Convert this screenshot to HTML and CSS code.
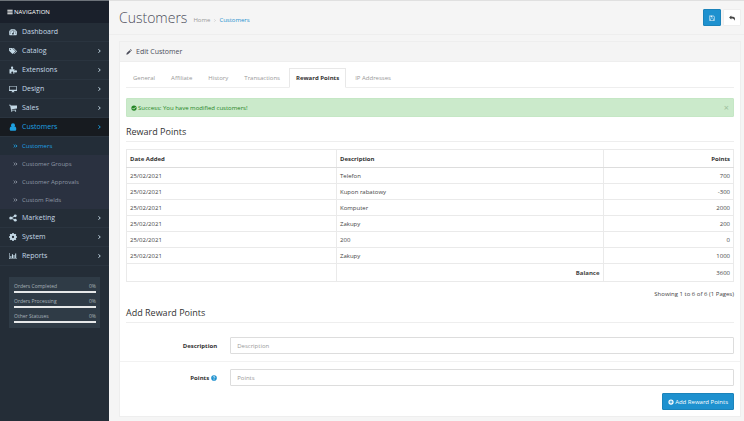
FILE: index.html
```html
<!DOCTYPE html>
<html lang="en">
<head>
    <meta charset="UTF-8">
    <meta name="viewport" content="width=device-width, initial-scale=1.0">
    <title>Customers</title>
    <link rel="stylesheet" href="styles.css">
</head>
<body>

    <!-- Icon set -->
    <svg class="sprite" aria-hidden="true">
        <symbol id="i-bars" viewBox="0 0 16 16"><path d="M1 2h14v2.6H1zM1 6.7h14v2.6H1zM1 11.4h14V14H1z"/></symbol>
        <symbol id="i-dashboard" viewBox="0 0 16 16"><path fill-rule="evenodd" d="M8 2a8 8 0 0 0-8 8c0 1.600.4 3 1.200 4.300.1.200.3.300.6.300h12.400c.3 0 .5-.1.600-.3A8 8 0 0 0 8 2zM2.300 9a1.100 1.100 0 1 1 0 2.200 1.100 1.100 0 0 1 0-2.200zM4 5a1.100 1.100 0 1 1 0 2.200A1.100 1.100 0 0 1 4 5zM8 3.200a1.100 1.100 0 1 1 0 2.200 1.100 1.100 0 0 1 0-2.200zM12 5a1.100 1.100 0 1 1 0 2.200A1.100 1.100 0 0 1 12 5zM13.700 9a1.100 1.100 0 1 1 0 2.200 1.100 1.100 0 0 1 0-2.200zM8.600 6.500l1.100.3-.9 3.400a1.700 1.700 0 1 1-1.100-.3z"/></symbol>
        <symbol id="i-tags" viewBox="0 0 18 16"><path fill-rule="evenodd" d="M0 2.200C0 1.500.5 1 1.200 1h4.600c.6 0 1.400.3 1.900.8l6 6c.5.5.5 1.200 0 1.700l-4.800 4.900c-.5.4-1.200.4-1.700 0l-6.400-6.500C.3 7.400 0 6.700 0 6zM3 2.700a1.200 1.200 0 1 0 0 2.400 1.200 1.200 0 0 0 0-2.400z"/><path d="M8 1h1.400c.7 0 1.400.3 1.900.8l6 6c.5.5.5 1.200 0 1.700l-4.900 4.900c-.6.500-1.100.4-1.700-.2l4.600-4.700c.5-.5.5-1.200 0-1.700z"/></symbol>
        <symbol id="i-puzzle" viewBox="0 0 16 16"><path d="M1 6.500h4.300C5.800 5.800 4 5 4 3.300 4 2 4.900 1 6.200 1s2.200 1 2.200 2.300C8.400 5 6.900 5.600 7.400 6.500H11v3c.9.3 1.300-1 2.800-1 1.300 0 2.200 1 2.200 2.300s-.9 2.300-2.200 2.300c-1.500 0-1.900-1.300-2.800-1V15H7.700c-.4-1 1-1.300 1-2.500 0-1-.8-1.700-2.100-1.700s-2.100.7-2.100 1.700c0 1.200 1.300 1.500 1 2.500H1z"/></symbol>
        <symbol id="i-desktop" viewBox="0 0 18 16"><path fill-rule="evenodd" d="M1.400 1h15.200c.8 0 1.400.6 1.400 1.400v8.700c0 .8-.6 1.400-1.400 1.400H11V14h1.500v1.200h-7V14H7v-1.500H1.400c-.8 0-1.400-.6-1.400-1.400V2.400C0 1.600.6 1 1.400 1zM1.500 2.400v7.500h15V2.400z"/></symbol>
        <symbol id="i-cart" viewBox="0 0 16 16"><path d="M0 1.500h3.100l.5 1.700H16v6l-10.800 1.300.2 1H14v1.300H4.200L2.200 2.900H0z"/><circle cx="5.400" cy="14" r="1.400"/><circle cx="13" cy="14" r="1.400"/></symbol>
        <symbol id="i-user" viewBox="0 0 16 16"><circle cx="8" cy="4.500" r="4"/><path d="M4.500 7C2 7.200 1.500 10 1.500 12.500 1.500 14.500 2.700 15.500 4.500 15.500h7c1.800 0 3-1 3-3 0-2.500-.5-5.300-3-5.500z"/></symbol>
        <symbol id="i-share" viewBox="0 0 16 16"><path d="M4 8l8-4M4 8l8 4" fill="none" stroke="currentColor" stroke-width="2"/><circle cx="3.500" cy="8" r="3"/><circle cx="12.500" cy="3.700" r="2.900"/><circle cx="12.500" cy="12.300" r="2.900"/></symbol>
        <symbol id="i-cog" viewBox="0 0 16 16"><circle cx="8" cy="8" r="4.300" fill="none" stroke="currentColor" stroke-width="4"/><path d="M8 0v3M8 13v3M0 8h3M13 8h3M2.400 2.400l2 2M11.600 11.600l2 2M13.600 2.400l-2 2M4.400 11.600l-2 2" stroke="currentColor" stroke-width="3"/></symbol>
        <symbol id="i-chart" viewBox="0 0 18 16"><path d="M0 1h1.300v12.700H18V15H0zM3 8h2.300v4.700H3zM6.600 4H9v8.700H6.600zM10.200 6h2.300v6.700h-2.300zM13.800 2.500h2.400v10.200h-2.400z"/></symbol>
        <symbol id="i-angle" viewBox="0 0 10 16"><path d="M3 4.500L6.500 8 3 11.500" fill="none" stroke="currentColor" stroke-width="2"/></symbol>
        <symbol id="i-double" viewBox="0 0 16 16"><path d="M2.500 3.500L7 8l-4.500 4.500M8.500 3.500L13 8l-4.500 4.500" fill="none" stroke="currentColor" stroke-width="2.800"/></symbol>
        <symbol id="i-pencil" viewBox="0 0 16 16"><path d="M1 15l.9-4.300 7.700-7.700 3.400 3.400-7.700 7.700zM10.500 2.100l1-1c.6-.6 1.300-.6 1.900 0l1.500 1.500c.6.6.6 1.300 0 1.900l-1 1z"/></symbol>
        <symbol id="i-save" viewBox="0 0 16 16"><path fill-rule="evenodd" d="M1 1h10.500L15 4.500V15H1zM2.300 2.300v11.400H4V9h8v4.700h1.700V5L11 2.300v3.900H4V2.300zM7.700 2.300v2.800h2V2.300zM5.300 10.300v3.400h5.400v-3.400z"/></symbol>
        <symbol id="i-reply" viewBox="0 0 16 16"><path d="M6 1v3.200c6.500 0 10 1.800 10 6 0 1.800-.8 3.400-2 4.800.5-4.300-2-6-8-6v3.300L.3 6.600z"/></symbol>
        <symbol id="i-check" viewBox="0 0 16 16"><circle cx="8" cy="8" r="7"/><path class="cut-alert" d="M4 8l3 3 5.300-5.300"/></symbol>
        <symbol id="i-question" viewBox="0 0 16 16"><circle cx="8" cy="8" r="7.500"/><path class="cut-white" d="M5.700 6.200C5.900 3.200 10.400 3.400 10.300 6 10.200 7.600 8 7.700 8 9.600M8 11v2"/></symbol>
        <symbol id="i-plus" viewBox="0 0 16 16"><circle cx="8" cy="8" r="7"/><path class="cut-blue" d="M8 4v8M4 8h8"/></symbol>
    </svg>

    <!-- Sidebar -->
    <nav class="sidebar">
        <div class="nav-title"><svg class="icon"><use href="#i-bars"/></svg> NAVIGATION</div>
        <ul class="menu">
            <li><a href="#"><svg class="icon"><use href="#i-dashboard"/></svg><span>Dashboard</span></a></li>
            <li><a href="#"><svg class="icon"><use href="#i-tags"/></svg><span>Catalog</span><svg class="arrow"><use href="#i-angle"/></svg></a></li>
            <li><a href="#"><svg class="icon"><use href="#i-puzzle"/></svg><span>Extensions</span><svg class="arrow"><use href="#i-angle"/></svg></a></li>
            <li><a href="#"><svg class="icon"><use href="#i-desktop"/></svg><span>Design</span><svg class="arrow"><use href="#i-angle"/></svg></a></li>
            <li><a href="#"><svg class="icon"><use href="#i-cart"/></svg><span>Sales</span><svg class="arrow"><use href="#i-angle"/></svg></a></li>
            <li class="active">
                <a href="#"><svg class="icon"><use href="#i-user"/></svg><span>Customers</span><svg class="arrow"><use href="#i-angle"/></svg></a>
                <ul class="submenu">
                    <li><a class="current" href="#"><svg class="double"><use href="#i-double"/></svg>Customers</a></li>
                    <li><a href="#"><svg class="double"><use href="#i-double"/></svg>Customer Groups</a></li>
                    <li><a href="#"><svg class="double"><use href="#i-double"/></svg>Customer Approvals</a></li>
                    <li><a href="#"><svg class="double"><use href="#i-double"/></svg>Custom Fields</a></li>
                </ul>
            </li>
            <li><a href="#"><svg class="icon"><use href="#i-share"/></svg><span>Marketing</span><svg class="arrow"><use href="#i-angle"/></svg></a></li>
            <li><a href="#"><svg class="icon"><use href="#i-cog"/></svg><span>System</span><svg class="arrow"><use href="#i-angle"/></svg></a></li>
            <li><a href="#"><svg class="icon"><use href="#i-chart"/></svg><span>Reports</span><svg class="arrow"><use href="#i-angle"/></svg></a></li>
        </ul>
        <div class="stats">
            <div class="stat"><span>Orders Completed</span><span>0%</span></div>
            <div class="stat"><span>Orders Processing</span><span>0%</span></div>
            <div class="stat"><span>Other Statuses</span><span>0%</span></div>
        </div>
    </nav>

    <!-- Content -->
    <main class="content">
        <header class="page-header">
            <h1>Customers</h1>
            <div class="breadcrumb"><a href="#">Home</a><svg class="separator"><use href="#i-angle"/></svg><a class="current" href="#">Customers</a></div>
            <div class="actions">
                <button class="btn btn-primary btn-icon" type="button" aria-label="Save"><svg class="icon"><use href="#i-save"/></svg></button>
                <button class="btn btn-default btn-icon" type="button" aria-label="Back"><svg class="icon"><use href="#i-reply"/></svg></button>
            </div>
        </header>

        <section class="panel">
            <h2 class="panel-title"><svg class="icon"><use href="#i-pencil"/></svg>Edit Customer</h2>
            <div class="panel-body">
                <div class="tabs">
                    <a href="#">General</a>
                    <a href="#">Affiliate</a>
                    <a href="#">History</a>
                    <a href="#">Transactions</a>
                    <a class="active" href="#">Reward Points</a>
                    <a href="#">IP Addresses</a>
                </div>

                <div class="alert">
                    <svg class="icon"><use href="#i-check"/></svg>
                    <span>Success: You have modified customers!</span>
                    <button class="close" type="button" aria-label="Close">×</button>
                </div>

                <h3>Reward Points</h3>
                <table class="points">
                    <thead>
                        <tr><th class="date">Date Added</th><th>Description</th><th class="amount">Points</th></tr>
                    </thead>
                    <tbody>
                        <tr><td>25/02/2021</td><td>Telefon</td><td class="amount">700</td></tr>
                        <tr><td>25/02/2021</td><td>Kupon rabatowy</td><td class="amount">-300</td></tr>
                        <tr><td>25/02/2021</td><td>Komputer</td><td class="amount">2000</td></tr>
                        <tr><td>25/02/2021</td><td>Zakupy</td><td class="amount">200</td></tr>
                        <tr><td>25/02/2021</td><td>200</td><td class="amount">0</td></tr>
                        <tr><td>25/02/2021</td><td>Zakupy</td><td class="amount">1000</td></tr>
                    </tbody>
                    <tfoot>
                        <tr><td></td><td class="balance">Balance</td><td class="amount">3600</td></tr>
                    </tfoot>
                </table>
                <div class="results">Showing 1 to 6 of 6 (1 Pages)</div>

                <h3>Add Reward Points</h3>
                <form>
                    <div class="form-group">
                        <label for="description">Description</label>
                        <input type="text" id="description" placeholder="Description">
                    </div>
                    <div class="form-group">
                        <label for="points">Points <svg class="icon"><use href="#i-question"/></svg></label>
                        <input type="text" id="points" placeholder="Points">
                    </div>
                    <div class="form-actions">
                        <button class="btn btn-primary" type="button"><svg class="icon"><use href="#i-plus"/></svg>Add Reward Points</button>
                    </div>
                </form>
            </div>
        </section>
    </main>

</body>
</html>
```
FILE: styles.css
```css
/* General Styles */
* {
    box-sizing: border-box;
}

body {
    display: flex;
    min-height: 100vh;
    margin: 0;
    font-family: 'Open Sans', sans-serif;
    font-size: 6px;
    line-height: 8px;
    color: #444;
    background-color: #f5f5f5;
}

a {
    color: inherit;
    text-decoration: none;
}

ul {
    list-style: none;
    margin: 0;
    padding: 0;
}

.sprite {
    position: absolute;
    width: 0;
    height: 0;
}

.icon {
    flex: none;
    width: 6px;
    height: 6px;
    fill: currentColor;
}

.cut-alert,
.cut-white,
.cut-blue {
    fill: none;
    stroke: #cbeacb;
    stroke-width: 2.4;
}

.cut-white {
    stroke: #fff;
    stroke-width: 2;
}

.cut-blue {
    stroke: #1e91cf;
}

/* Sidebar */
.sidebar {
    flex: none;
    width: 109px;
    background-color: #242d37;
    border-top: 1px solid #6d737a;
}

.nav-title {
    display: flex;
    align-items: center;
    gap: 1px;
    height: 22px;
    padding-left: 7px;
    color: #fff;
    background-color: #1a202b;
}

.menu > li > a {
    display: flex;
    align-items: center;
    height: 19px;
    padding: 0 7px 0 9px;
    font-size: 7px;
    color: #c4d9e6;
    border-bottom: 1px solid #2a343f;
}

.menu > li > a > span {
    flex: 1;
}

.menu .icon {
    width: 8px;
    height: 8px;
    margin-right: 5px;
}

.arrow {
    width: 5px;
    height: 8px;
}

.menu > .active > a {
    color: #1ea0e0;
    background-color: #171b20;
}

.submenu {
    background-color: #2a3140;
}

.submenu a {
    display: flex;
    align-items: center;
    gap: 4px;
    height: 18px;
    padding-left: 13px;
    color: #8f98a6;
}

.submenu .current {
    color: #1ea0e0;
    background-color: #232d38;
}

.double {
    width: 5px;
    height: 6px;
}

/* Order statuses */
.stats {
    display: grid;
    gap: 3px;
    margin: 11px 9px;
    padding: 4px 4px 5px 5px;
    font-size: 5px;
    color: #a9b3bb;
    background-color: #2f3b46;
}

.stat {
    display: flex;
    justify-content: space-between;
    height: 12px;
    line-height: 10px;
    border-bottom: 2px solid #e6e8e9;
}

/* Content */
.content {
    flex: 1;
    min-width: 0;
    border-top: 1px solid #e0e0e0;
}

.page-header {
    display: flex;
    align-items: center;
    height: 34px;
    padding: 0 3px 0 10px;
    border-bottom: 1px solid #eee;
}

h1 {
    margin: 0 6px 0 0;
    font-size: 14px;
    line-height: 20px;
    font-weight: 300;
    color: #4c4d5a;
}

.breadcrumb {
    display: flex;
    align-items: center;
    padding-top: 5px;
    color: #999;
}

.breadcrumb .current {
    color: #1e91cf;
}

.separator {
    width: 4px;
    height: 5px;
    margin: 0 2px 0 3px;
    color: #bbb;
}

.actions {
    display: flex;
    gap: 2px;
    margin-left: auto;
}

/* Buttons */
.btn {
    display: flex;
    align-items: center;
    justify-content: center;
    gap: 1px;
    height: 17px;
    padding: 0 5px;
    font: inherit;
    border: 1px solid #1b83ba;
    border-radius: 1px;
    cursor: pointer;
}

.btn-primary {
    color: #fff;
    background-color: #1e91cf;
}

.btn-default {
    color: #444;
    background-color: #fff;
    border-color: #eee;
}

.btn-icon {
    width: 18px;
    padding: 0;
}

/* Panel */
.panel {
    margin: 6px 3px 0 10px;
    background-color: #fff;
    border: 1px solid #eee;
}

.panel-title {
    display: flex;
    align-items: center;
    gap: 4px;
    height: 20px;
    margin: 0;
    padding-left: 6px;
    font-size: 7px;
    font-weight: 400;
    color: #4c4d5a;
    background-color: #f4f4f4;
    border-bottom: 1px solid #eee;
}

.panel-body {
    padding: 6px;
}

/* Tabs */
.tabs {
    display: flex;
    gap: 2px;
    height: 20px;
    margin-bottom: 10px;
    border-bottom: 1px solid #eee;
}

.tabs a {
    height: 20px;
    padding: 5px 6px;
    color: #999;
    border: 1px solid transparent;
}

.tabs .active {
    font-weight: 700;
    color: #333;
    background-color: #fff;
    border-color: #e8e8e8;
    border-bottom-color: #fff;
}

/* Alert */
.alert {
    display: flex;
    align-items: center;
    gap: 1px;
    height: 19px;
    margin-bottom: 9px;
    padding: 0 4px;
    color: #258525;
    background-color: #cbeacb;
    border: 1px solid #c5e7c5;
    border-radius: 1px;
}

.close {
    margin-left: auto;
    padding: 0;
    font: inherit;
    font-size: 9px;
    color: #9dc09d;
    background: none;
    border: none;
    cursor: pointer;
}

h3 {
    margin: 0 0 7px;
    padding-bottom: 3px;
    font-size: 9px;
    line-height: 12px;
    font-weight: 400;
    color: #333;
    border-bottom: 1px solid #eee;
}

/* Points table */
.points {
    width: 100%;
    border-collapse: collapse;
    table-layout: fixed;
}

.points th,
.points td {
    height: 16px;
    padding: 0 3px;
    text-align: left;
    border: 1px solid #eaeaea;
}

.points th,
.points tfoot td {
    height: 18px;
}

.points th {
    color: #333;
    border-bottom-color: #ddd;
}

.points .date {
    width: 34.6%;
}

.points .amount {
    width: 21.5%;
    text-align: right;
}

.points .balance {
    font-weight: 700;
    text-align: right;
}

.results {
    margin: 8px 0 9px;
    text-align: right;
}

/* Form */
.form-group {
    display: flex;
    align-items: center;
    gap: 13px;
    margin: 0 -6px;
    padding: 7px 6px;
}

.form-group + .form-group {
    border-top: 1px solid #f2f2f2;
}

.form-group label {
    display: flex;
    align-items: center;
    justify-content: flex-end;
    gap: 2px;
    width: 15%;
    font-weight: 700;
    color: #333;
}

.form-group label .icon {
    color: #1e91cf;
}

.form-group input {
    flex: 1;
    min-width: 0;
    height: 17px;
    padding: 0 6px;
    font: inherit;
    color: #555;
    border: 1px solid #ddd;
    border-radius: 1px;
}

.form-group input::placeholder {
    color: #999;
}

.form-actions {
    display: flex;
    justify-content: flex-end;
}
```
